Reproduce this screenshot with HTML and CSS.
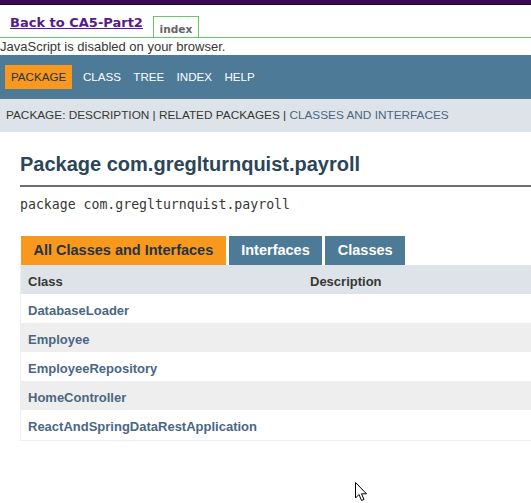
FILE: index.html
```html
<!DOCTYPE html>
<html>
<head>
<meta charset="utf-8">
<link rel="stylesheet" href="styles.css">
</head>
<body>
<div class="topbar"></div>
<div class="backrow">
  <a class="back" href="#">Back to CA5-Part2</a>
  <span class="idx">index</span>
</div>
<div class="nojs">JavaScript is disabled on your browser.</div>
<nav class="nav">
  <span class="nav-item active">PACKAGE</span>
  <span class="nav-item">CLASS</span>
  <span class="nav-item">TREE</span>
  <span class="nav-item">INDEX</span>
  <span class="nav-item">HELP</span>
</nav>
<div class="subnav">PACKAGE:&nbsp;DESCRIPTION&nbsp;|&nbsp;RELATED PACKAGES&nbsp;|&nbsp;<span class="sublink">CLASSES AND INTERFACES</span></div>
<main class="main">
  <h1 class="title">Package com.greglturnquist.payroll</h1>
  <div class="rule"></div>
  <div class="decl">package com.greglturnquist.payroll</div>
  <div class="tabs">
    <span class="tab active">All Classes and Interfaces</span>
    <span class="tab">Interfaces</span>
    <span class="tab">Classes</span>
  </div>
  <div class="table">
    <div class="row head"><span class="c1">Class</span><span class="c2">Description</span></div>
    <div class="row"><span class="c1 link">DatabaseLoader</span><span class="c2"></span></div>
    <div class="row odd"><span class="c1 link">Employee</span><span class="c2"></span></div>
    <div class="row"><span class="c1 link">EmployeeRepository</span><span class="c2"></span></div>
    <div class="row odd"><span class="c1 link">HomeController</span><span class="c2"></span></div>
    <div class="row"><span class="c1 link">ReactAndSpringDataRestApplication</span><span class="c2"></span></div>
  </div>
</main>
<svg class="cursor" width="13" height="20" viewBox="0 0 13 20"><path d="M0.5 0.5 L0.5 16 L4 12.5 L6.5 18.5 L9 17.5 L6.5 11.8 L11.5 11.8 Z" fill="#fff" stroke="#000" stroke-width="1"/></svg>
</body>
</html>
```
FILE: styles.css
```css
html, body { margin: 0; padding: 0; background: #fff; }
body { font-family: "Liberation Sans", Arial, sans-serif; color: #353833; overflow: hidden; position: relative; width: 531px; height: 503px; }
.topbar { height: 4px; background: #3b0a52; border-bottom: 1px solid #1c0629; }
.backrow { display: flex; align-items: flex-end; height: 32px; border-bottom: 1px solid #6ac76a; }
.back { font-family: "DejaVu Sans", Verdana, sans-serif; font-weight: bold; font-size: 13px; color: #551a8b; text-decoration: underline; margin-left: 10px; margin-bottom: 7px; }
.idx { font-family: "DejaVu Sans", Verdana, sans-serif; font-weight: bold; font-size: 10.6px; color: #666; margin-left: 10px; border: 1px solid #6ac76a; border-bottom: none; width: 44px; height: 20px; line-height: 24px; text-align: center; box-sizing: content-box; }
.nojs { font-size: 13px; line-height: 17px; height: 17px; }
.nav { background: #4d7a97; height: 44px; display: flex; align-items: center; padding-left: 5px; }
.nav-item { color: #fff; font-size: 11.6px; padding: 0 6.2px; height: 24px; line-height: 24px; }
.nav-item.active { background: #f8981d; color: #253441; padding: 0 6px; margin-right: 4.5px; }
.subnav { background: #dee3e9; height: 33px; line-height: 33px; font-size: 11.8px; padding-left: 6px; white-space: nowrap; }
.sublink { color: #4a6782; }
.main { padding-left: 20px; }
.title { margin: 0; padding-top: 19px; font-size: 20px; line-height: 26px; color: #2c4557; font-weight: bold; }
.rule { height: 2px; background: #6d6d6d; margin-top: 8px; }
.decl { font-family: "DejaVu Sans Mono", monospace; font-size: 13.2px; margin-top: 10px; line-height: 16px; }
.tabs { display: flex; gap: 3px; margin-top: 23px; padding-left: 1px; }
.tab { background: #4d7a97; color: #fff; font-weight: bold; font-size: 14.5px; height: 29px; line-height: 29px; padding: 0 12.5px; }
.tab.active { background: #f8981d; color: #253441; }
.table { border-left: 1px solid #eee; border-bottom: 1px solid #eee; }
.row { display: flex; box-sizing: border-box; height: 29px; padding-top: 3px; align-items: center; background: #fff; }
.row.odd { background: #eeeeef; }
.row.head { background: #dee3e9; }
.row:last-child { height: 30px; }
.c1 { width: 282px; padding-left: 7px; font-weight: bold; font-size: 13px; }
.c2 { font-weight: bold; font-size: 13px; }
.link { color: #4a6782; }
.cursor { position: absolute; left: 355px; top: 482px; }
```
